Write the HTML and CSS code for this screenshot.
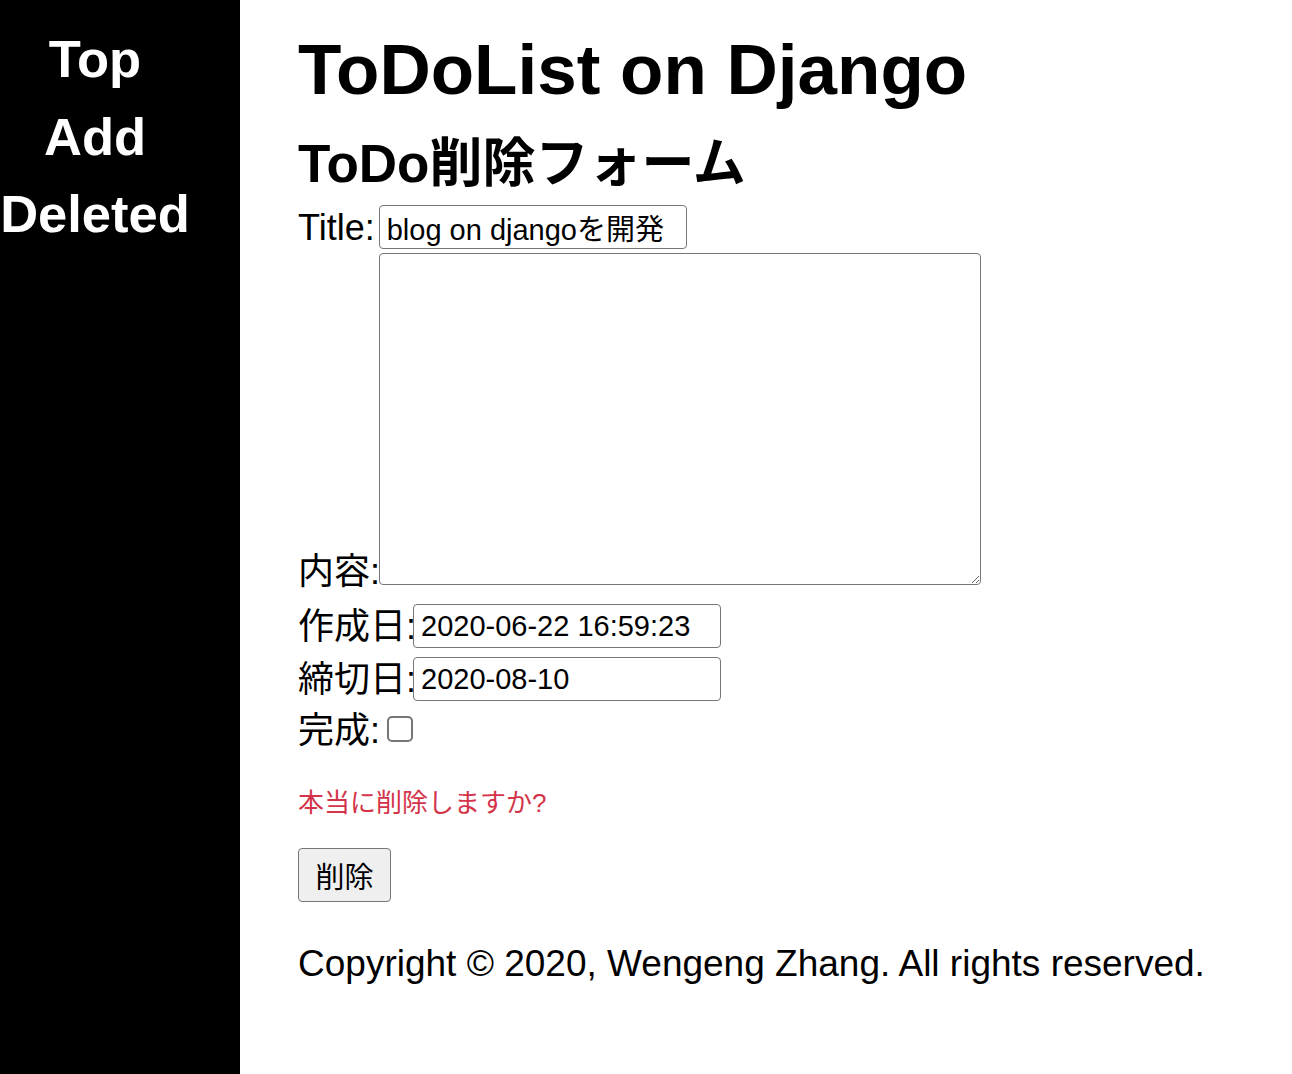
FILE: index.html
```html
<!DOCTYPE html>
<html lang="ja">
<head>
<meta charset="utf-8">
<title>ToDoList on Django</title>
<link rel="stylesheet" href="styles.css">
</head>
<body>
<div class="page">
  <nav class="sidebar">
    <a class="nav-link" href="#">Top</a>
    <a class="nav-link" href="#">Add</a>
    <a class="nav-link" href="#">Deleted</a>
  </nav>
  <main class="main">
    <h1 class="title">ToDoList on Django</h1>
    <h2 class="subtitle">ToDo削除フォーム</h2>
    <form class="form">
      <div class="field field-title">
        <label class="label" for="t">Title:</label><input id="t" class="text-input" type="text" value="blog on djangoを開発">
      </div>
      <div class="field field-area">
        <label class="label label-area" for="c">内容:</label><textarea id="c" class="textarea"></textarea>
      </div>
      <div class="field field-created">
        <label class="label" for="d1">作成日:</label><input id="d1" class="text-input" type="text" value="2020-06-22 16:59:23">
      </div>
      <div class="field field-deadline">
        <label class="label" for="d2">締切日:</label><input id="d2" class="text-input" type="text" value="2020-08-10">
      </div>
      <div class="field field-done">
        <label class="label" for="done">完成:</label><input id="done" class="checkbox" type="checkbox">
      </div>
      <p class="warning">本当に削除しますか?</p>
      <button class="button" type="button">削除</button>
    </form>
    <footer class="footer">Copyright © 2020, Wengeng Zhang. All rights reserved.</footer>
  </main>
</div>
</body>
</html>
```
FILE: styles.css
```css
html, body {
  margin: 0;
  padding: 0;
  background: #ffffff;
}

body {
  font-family: "Liberation Sans", "Noto Sans CJK JP", sans-serif;
  color: #000000;
}

.page {
  display: flex;
  min-height: 1074px;
}

.sidebar {
  width: 240px;
  flex: 0 0 240px;
  background: #000000;
  display: flex;
  flex-direction: column;
  align-items: center;
  padding: 20px 50px 0 0;
  box-sizing: border-box;
}

.nav-link {
  color: #ffffff;
  text-decoration: none;
  font-weight: bold;
  font-size: 52.5px;
  line-height: 77.5px;
}

.main {
  flex: 1;
  padding: 30px 0 0 58px;
}

.title {
  margin: 0;
  font-size: 71px;
  line-height: 80px;
  font-weight: bold;
}

.subtitle {
  margin: 23px 0 0 0;
  font-size: 53px;
  line-height: 61px;
  font-weight: bold;
}

.form {
  margin: 0;
}

.field {
  display: flex;
  align-items: center;
}

.label {
  font-size: 36px;
  line-height: 41px;
}

.field-title {
  margin-top: 11px;
}

.field-title .text-input {
  margin-left: 4px;
}

.field-area {
  margin-top: 4px;
  align-items: flex-end;
}

.label-area {
  line-height: 36px;
  margin-bottom: -5px;
}

.field-created {
  margin-top: 19px;
}

.field-created .text-input,
.field-deadline .text-input {
  margin-left: -3px;
}

.field-deadline {
  margin-top: 9px;
}

.field-done {
  margin-top: 9px;
}

.text-input {
  width: 308px;
  height: 44px;
  box-sizing: border-box;
  margin: 0;
  padding: 0 7px;
  border: 1px solid #767676;
  border-radius: 4px;
  font-family: "Liberation Sans", "Noto Sans CJK JP", sans-serif;
  font-size: 29px;
  color: #000000;
  background: #ffffff;
}

.textarea {
  width: 602px;
  height: 332px;
  box-sizing: border-box;
  margin: 0 0 0 -1px;
  padding: 4px;
  border: 1px solid #767676;
  border-radius: 4px;
  font-family: "Liberation Mono", monospace;
  font-size: 29px;
  background: #ffffff;
}

.checkbox {
  appearance: none;
  -webkit-appearance: none;
  width: 26px;
  height: 26px;
  box-sizing: border-box;
  margin: 0 0 4px 7px;
  border: 2px solid #767676;
  border-radius: 5px;
  background: #ffffff;
}

.warning {
  margin: 37px 0 0 0;
  color: #d3344a;
  font-size: 26px;
  line-height: 30px;
}

.button {
  display: block;
  margin-top: 30px;
  width: 93px;
  height: 54px;
  box-sizing: border-box;
  padding: 0;
  border: 1px solid #767676;
  border-radius: 4px;
  background: #efefef;
  font-family: "Liberation Sans", "Noto Sans CJK JP", sans-serif;
  font-size: 29px;
  color: #000000;
}

.footer {
  margin-top: 41px;
  font-size: 37px;
  line-height: 41px;
}
```
